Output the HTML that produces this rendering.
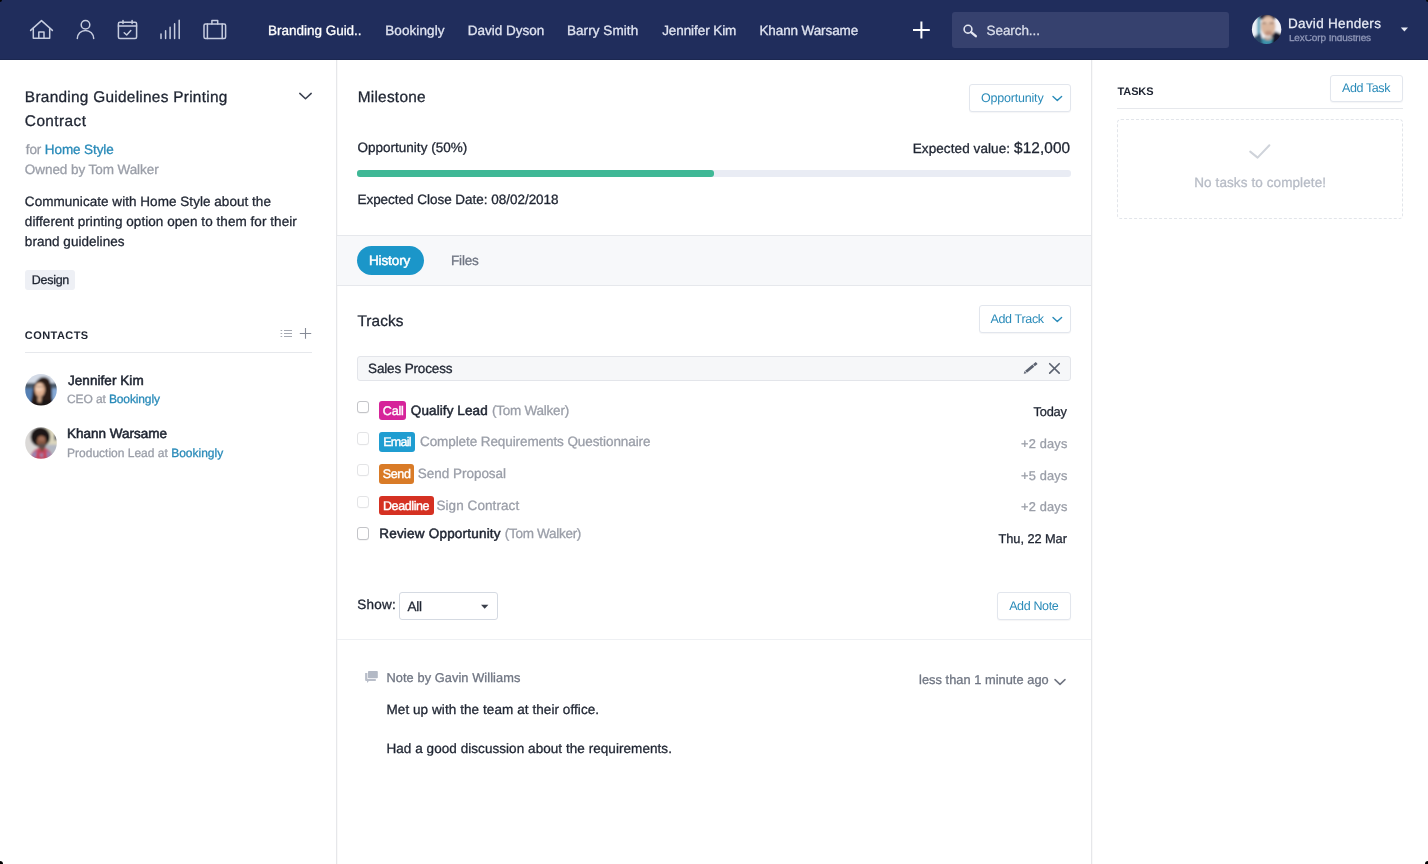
<!DOCTYPE html>
<html><head><meta charset="utf-8">
<style>
*{box-sizing:border-box;margin:0;padding:0}
html,body{width:1428px;height:864px;overflow:hidden;background:#fff}
body{text-rendering:geometricPrecision;font-family:"Liberation Sans",sans-serif;color:#1f2532;font-size:14px;position:relative}
a{color:#2a8bb9;text-decoration:none}
.abs{position:absolute}
svg{position:absolute;left:0;top:0;overflow:visible}
#nav{position:absolute;left:0;top:0;width:1428px;height:60px;background:#202d5c;border-bottom:1px solid #1b2750}
#search{position:absolute;left:952px;top:12px;width:277px;height:36px;background:#36416e;border-radius:3px}
.vline{position:absolute;top:60px;width:1px;height:804px;background:#e6e7ea;box-shadow:1px 0 0 rgba(0,0,0,.025)}
.btn{position:absolute;border:1px solid #e2e6ed;border-radius:3px;background:#fff;box-shadow:0 1px 1px rgba(20,30,60,.04)}
.t{position:absolute;white-space:nowrap;line-height:20px;-webkit-text-stroke-width:.3px}
.tagb{position:absolute;border-radius:3px}
.cb{position:absolute;width:12px;height:12.4px;border:1px solid #c3c4c8;border-radius:3px;background:#fff;box-shadow:0 .5px 0 rgba(0,0,0,.08)}
</style></head><body>
<div id="nav"></div>
<div id="search"></div>
<div class="vline" style="left:336px"></div>
<div class="vline" style="left:1091px"></div>

<div class="abs" style="left:-2px;top:-2px;width:4px;height:4px;border-radius:50%;background:#000"></div>
<div class="abs" style="left:1426px;top:-2px;width:4px;height:4px;border-radius:50%;background:#000"></div>
<div class="abs" style="left:-3px;top:861px;width:6px;height:6px;border-radius:50%;background:#000"></div>
<div class="abs" style="left:1425px;top:861px;width:6px;height:6px;border-radius:50%;background:#000"></div>
<!-- left panel shapes -->
<div class="abs" style="left:25px;top:270px;width:50px;height:20px;background:#eef0f5;border-radius:3px"></div>
<div class="abs" style="left:25px;top:352px;width:287px;height:1px;background:#e6e8ec"></div>

<!-- center shapes -->
<div class="btn" style="left:969px;top:84px;width:102px;height:28px"></div>
<div class="abs" style="left:357px;top:170px;width:714px;height:6.6px;border-radius:3px;background:#e9ecf4"></div>
<div class="abs" style="left:357px;top:170px;width:357px;height:6.6px;border-radius:3px;background:#3fb896"></div>
<div class="abs" style="left:337px;top:235px;width:754px;height:51px;background:#f7f8fa;border-top:1px solid #e6e8ec;border-bottom:1px solid #e6e8ec"></div>
<div class="abs" style="left:357px;top:246px;width:67px;height:29px;border-radius:15px;background:#1b96c9"></div>
<div class="btn" style="left:979px;top:305px;width:92px;height:28px"></div>
<div class="abs" style="left:357px;top:356px;width:714px;height:25px;background:#f6f7f9;border:1px solid #e3e5ea;border-radius:3px"></div>

<div class="cb" style="left:357px;top:400.5px"></div>
<div class="cb" style="left:357px;top:432.3px;opacity:.45"></div>
<div class="cb" style="left:357px;top:464px;opacity:.45"></div>
<div class="cb" style="left:357px;top:495.7px;opacity:.45"></div>
<div class="cb" style="left:357px;top:527.2px"></div>
<div class="tagb" style="left:379px;top:400.7px;width:27.3px;height:19.3px;background:#d6249a"></div>
<div class="tagb" style="left:379px;top:432.4px;width:36.4px;height:19.3px;background:#1f9dd1"></div>
<div class="tagb" style="left:379px;top:464.1px;width:35.3px;height:19.5px;background:#d97b27"></div>
<div class="tagb" style="left:379px;top:495.8px;width:54.5px;height:19.4px;background:#d53122"></div>

<div class="abs" style="left:399px;top:592px;width:99px;height:28px;border:1px solid #d5dae2;border-radius:3px;background:#fff"></div>
<div class="btn" style="left:997px;top:592px;width:74px;height:28px"></div>
<div class="abs" style="left:337px;top:639px;width:754px;height:1px;background:#eef0f3"></div>

<!-- right shapes -->
<div class="btn" style="left:1330px;top:75px;width:73px;height:27px"></div>
<div class="abs" style="left:1117px;top:108px;width:286px;height:1px;background:#e6e8ec"></div>
<div class="abs" style="left:1117px;top:119px;width:286px;height:100px;border:1px dashed #e2e5ea;border-radius:4px"></div>

<div id="txt" style="position:absolute;left:0;top:0;width:1428px;height:864px;will-change:transform">
<!-- org text clipped -->
<div class="abs" style="left:1286px;top:35px;width:100px;height:12px;overflow:hidden"><div id="org" class="t" style="left:2.9px;top:-6px;font-size:10px;color:#9098b8;letter-spacing:-.1px">LexCorp Industries</div></div>

<div id="n1" class="t" style="left:268.05px;top:21px;font-size:13.5px;color:#fff;letter-spacing:-0.019px;-webkit-text-stroke:.3px #fff">Branding Guid..</div>
<div id="n2" class="t" style="left:385.24px;top:21px;font-size:13.5px;color:#dfe3f0;letter-spacing:0.090px;">Bookingly</div>
<div id="n3" class="t" style="left:467.72px;top:21px;font-size:13.5px;color:#dfe3f0;letter-spacing:-0.009px;">David Dyson</div>
<div id="n4" class="t" style="left:566.91px;top:21px;font-size:13.5px;color:#dfe3f0;letter-spacing:0.072px;">Barry Smith</div>
<div id="n5" class="t" style="left:662.14px;top:21px;font-size:13.5px;color:#dfe3f0;letter-spacing:-0.074px;">Jennifer Kim</div>
<div id="n6" class="t" style="left:759.48px;top:21px;font-size:13.5px;color:#dfe3f0;letter-spacing:-0.112px;">Khann Warsame</div>
<div id="se" class="t" style="left:986.62px;top:21px;font-size:13.5px;color:#d9ddea;letter-spacing:-0.090px;">Search...</div>
<div id="us" class="t" style="left:1287.91px;top:14px;font-size:13.5px;color:#e9ecf6;letter-spacing:0.307px;-webkit-text-stroke:.25px #e9ecf6">David Henders</div>
<div id="ti1" class="t" style="left:24.86px;top:88px;font-size:15.4px;color:#1f2532;letter-spacing:0.273px;">Branding Guidelines Printing</div>
<div id="ti2" class="t" style="left:24.86px;top:112px;font-size:15.4px;color:#1f2532;letter-spacing:0.411px;">Contract</div>
<div id="for" class="t" style="left:25.76px;top:140px;font-size:13.5px;color:#9a9ea8;letter-spacing:-0.104px;">for <a>Home Style</a></div>
<div id="own" class="t" style="left:24.86px;top:160px;font-size:13.5px;color:#9a9ea8;letter-spacing:-0.070px;">Owned by Tom Walker</div>
<div id="d1" class="t" style="left:24.86px;top:192px;font-size:13.5px;color:#1f2532;letter-spacing:0.040px;">Communicate with Home Style about the</div>
<div id="d2" class="t" style="left:24.86px;top:212px;font-size:13.5px;color:#1f2532;letter-spacing:0.059px;">different printing option open to them for their</div>
<div id="d3" class="t" style="left:24.86px;top:232px;font-size:13.5px;color:#1f2532;letter-spacing:0.036px;">brand guidelines</div>
<div id="tag" class="t" style="left:31.86px;top:270px;font-size:12.5px;color:#1f2532;letter-spacing:-0.306px;">Design</div>
<div id="con" class="t" style="left:24.86px;top:326px;font-size:11.0px;color:#1f2532;letter-spacing:0.424px;font-weight:bold;-webkit-text-stroke-width:0">CONTACTS</div>
<div id="c1" class="t" style="left:67.95px;top:371px;font-size:13.5px;color:#1f2532;letter-spacing:0.065px;-webkit-text-stroke:.55px #1f2532">Jennifer Kim</div>
<div id="c1s" class="t" style="left:67.05px;top:389px;font-size:12.0px;color:#9a9ea8;letter-spacing:-0.120px;">CEO at <a>Bookingly</a></div>
<div id="c2" class="t" style="left:67.05px;top:424px;font-size:13.5px;color:#1f2532;letter-spacing:0.000px;-webkit-text-stroke:.55px #1f2532">Khann Warsame</div>
<div id="c2s" class="t" style="left:67.05px;top:443px;font-size:12.0px;color:#9a9ea8;letter-spacing:-0.000px;">Production Lead at <a>Bookingly</a></div>
<div id="ms" class="t" style="left:357.67px;top:88px;font-size:15.4px;color:#1f2532;letter-spacing:0.259px;">Milestone</div>
<div id="ob" class="t" style="left:981.00px;top:88px;font-size:12.5px;color:#2a8bb9;letter-spacing:-0.198px;-webkit-text-stroke-width:0">Opportunity</div>
<div id="op" class="t" style="left:357.43px;top:138px;font-size:13.5px;color:#1f2532;letter-spacing:0.017px;">Opportunity (50%)</div>
<div id="ev" class="t" style="left:912.72px;top:139px;font-size:13.5px;color:#1f2532;letter-spacing:0.090px;">Expected value: <span style="font-size:15.4px">$12,000</span></div>
<div id="ecd" class="t" style="left:357.43px;top:190px;font-size:13.5px;color:#1f2532;letter-spacing:-0.024px;">Expected Close Date: 08/02/2018</div>
<div id="hi" class="t" style="left:368.89px;top:251px;font-size:13.5px;color:#fff;letter-spacing:-0.090px;-webkit-text-stroke:.5px #fff">History</div>
<div id="fi" class="t" style="left:451.10px;top:251px;font-size:13.5px;color:#6f7582;letter-spacing:-0.225px;">Files</div>
<div id="tr" class="t" style="left:357.38px;top:312px;font-size:15.4px;color:#1f2532;letter-spacing:0.090px;">Tracks</div>
<div id="at" class="t" style="left:990.43px;top:309px;font-size:12.5px;color:#2a8bb9;letter-spacing:-0.326px;-webkit-text-stroke-width:0">Add Track</div>
<div id="sp" class="t" style="left:368.05px;top:359px;font-size:13.5px;color:#1f2532;letter-spacing:-0.150px;">Sales Process</div>
<div id="t1" class="t" style="left:382.83px;top:401px;font-size:12.5px;color:#fff;letter-spacing:-0.180px;-webkit-text-stroke:.4px #fff">Call</div>
<div id="q1" class="t" style="left:410.86px;top:401px;font-size:13.5px;color:#1f2532;letter-spacing:0.089px;-webkit-text-stroke:.5px #1f2532">Qualify Lead</div>
<div id="q1b" class="t" style="left:492.00px;top:401px;font-size:13.5px;color:#9a9ea8;letter-spacing:-0.237px;">(Tom Walker)</div>
<div id="r1" class="t" style="left:1033.55px;top:402px;font-size:12.8px;color:#1f2532;letter-spacing:-0.202px;">Today</div>
<div id="t2" class="t" style="left:383.22px;top:432px;font-size:12.5px;color:#fff;letter-spacing:-0.727px;-webkit-text-stroke:.4px #fff">Email</div>
<div id="q2" class="t" style="left:420.00px;top:432px;font-size:13.5px;color:#9a9ea8;letter-spacing:-0.085px;">Complete Requirements Questionnaire</div>
<div id="r2" class="t" style="left:1021.06px;top:434px;font-size:12.8px;color:#9a9ea8;letter-spacing:0.180px;">+2 days</div>
<div id="t3" class="t" style="left:382.83px;top:464px;font-size:12.5px;color:#fff;letter-spacing:-0.390px;-webkit-text-stroke:.4px #fff">Send</div>
<div id="q3" class="t" style="left:417.86px;top:464px;font-size:13.5px;color:#9a9ea8;letter-spacing:-0.030px;">Send Proposal</div>
<div id="r3" class="t" style="left:1021.06px;top:466px;font-size:12.8px;color:#9a9ea8;letter-spacing:0.180px;">+5 days</div>
<div id="t4" class="t" style="left:383.00px;top:496px;font-size:12.5px;color:#fff;letter-spacing:-0.403px;-webkit-text-stroke:.4px #fff">Deadline</div>
<div id="q4" class="t" style="left:436.48px;top:496px;font-size:13.5px;color:#9a9ea8;letter-spacing:0.075px;">Sign Contract</div>
<div id="r4" class="t" style="left:1021.06px;top:497px;font-size:12.8px;color:#9a9ea8;letter-spacing:0.180px;">+2 days</div>
<div id="q5" class="t" style="left:379.24px;top:524px;font-size:13.5px;color:#1f2532;letter-spacing:0.208px;-webkit-text-stroke:.5px #1f2532">Review Opportunity</div>
<div id="q5b" class="t" style="left:504.83px;top:524px;font-size:13.5px;color:#9a9ea8;letter-spacing:-0.295px;">(Tom Walker)</div>
<div id="r5" class="t" style="left:998.57px;top:529px;font-size:12.8px;color:#1f2532;letter-spacing:-0.063px;">Thu, 22 Mar</div>
<div id="sh" class="t" style="left:357.24px;top:595px;font-size:13.5px;color:#1f2532;letter-spacing:0.225px;">Show:</div>
<div id="all" class="t" style="left:407.57px;top:597px;font-size:13.5px;color:#1f2532;letter-spacing:-0.270px;">All</div>
<div id="an" class="t" style="left:1009.14px;top:596px;font-size:12.5px;color:#2a8bb9;letter-spacing:-0.360px;-webkit-text-stroke-width:0">Add Note</div>
<div id="nb" class="t" style="left:386.48px;top:668px;font-size:12.8px;color:#6f7582;letter-spacing:0.077px;">Note by Gavin Williams</div>
<div id="ago" class="t" style="left:919.00px;top:670px;font-size:12.8px;color:#6f7582;letter-spacing:0.043px;">less than 1 minute ago</div>
<div id="m1" class="t" style="left:386.48px;top:700px;font-size:13.5px;color:#1f2532;letter-spacing:0.077px;">Met up with the team at their office.</div>
<div id="m2" class="t" style="left:386.48px;top:739px;font-size:13.5px;color:#1f2532;letter-spacing:0.057px;">Had a good discussion about the requirements.</div>
<div id="tk" class="t" style="left:1117.52px;top:82px;font-size:11.0px;color:#1f2532;letter-spacing:-0.113px;font-weight:bold;-webkit-text-stroke-width:0">TASKS</div>
<div id="atk" class="t" style="left:1342.00px;top:78px;font-size:12.5px;color:#2a8bb9;letter-spacing:-0.399px;-webkit-text-stroke-width:0">Add Task</div>
<div id="nt" class="t" style="left:1194.24px;top:173px;font-size:13.5px;color:#b7bcc6;letter-spacing:0.099px;">No tasks to complete!</div>
</div>

<svg width="1428" height="864" viewBox="0 0 1428 864" fill="none">
<defs>
<filter id="bl" x="-10%" y="-10%" width="120%" height="120%"><feGaussianBlur stdDeviation="1"/></filter>
<clipPath id="cA"><circle cx="41" cy="389.8" r="15.8"/></clipPath>
<clipPath id="cB"><circle cx="41" cy="443" r="15.8"/></clipPath>
<clipPath id="cC"><circle cx="1266.6" cy="29.4" r="14.7"/></clipPath>
</defs>
<!-- nav icons -->
<g stroke="#c6ccdf" stroke-width="1.5" stroke-linecap="round" stroke-linejoin="round">
<path d="M30.6 30.4 L41.5 20.6 L52.4 30.4"/>
<path d="M33.3 28.2 V38.3 H49.7 V28.2"/>
<path d="M38.8 38.3 V32 H44 V38.3"/>
<circle cx="85.5" cy="24.8" r="4.3"/>
<path d="M77.3 38.6 a8.2 8.2 0 0 1 16.4 0"/>
<rect x="118.4" y="22.2" width="18.2" height="16.2" rx="1.5"/>
<path d="M118.4 26 H136.6 M123 20.4 V23.6 M132.1 20.4 V23.6"/>
<path d="M124.2 32.8 L126.7 35 L130.8 30.6"/>
<path d="M161 34 V38.6 M165.6 30.8 V38.6 M170.1 27.3 V38.6 M174.6 23.7 V38.6 M179.2 20.2 V38.6"/>
<rect x="204" y="24" width="21.6" height="14.4" rx="1.5"/>
<path d="M211.9 24 V20.6 H217.7 V24 M207.4 24 V38.4 M222.2 24 V38.4"/>
</g>
<path d="M913 30 H929.8 M921.4 21.6 V38.4" stroke="#fff" stroke-width="2"/>
<circle cx="968" cy="29.2" r="3.9" stroke="#e3e6f1" stroke-width="1.6"/>
<path d="M971 32.2 L975.8 36.2" stroke="#e3e6f1" stroke-width="2.4" stroke-linecap="round"/>
<path d="M1400.8 27.4 H1408 L1404.4 31.4 Z" fill="#e6e9f3"/>
<!-- left -->
<path d="M299.8 93.4 L305.5 98.8 L311.2 93.4" stroke="#3a4050" stroke-width="1.5" stroke-linecap="round" stroke-linejoin="round"/>
<path d="M284 330.5 H292 M284 333.5 H292 M284 336.5 H292" stroke="#a4a8b1" stroke-width="1"/>
<path d="M280.6 330.5 H282.2 M280.6 333.5 H282.2 M280.6 336.5 H282.2" stroke="#a4a8b1" stroke-width="1"/>
<path d="M299.8 333.5 H311.2 M305.5 328 V338.8" stroke="#868b97" stroke-width="1.1"/>
<!-- button chevrons -->
<path d="M1053 96.4 L1057.3 100.5 L1061.6 96.4" stroke="#2a8bb9" stroke-width="1.4" stroke-linecap="round" stroke-linejoin="round"/>
<path d="M1053 317.4 L1057.3 321.5 L1061.6 317.4" stroke="#2a8bb9" stroke-width="1.4" stroke-linecap="round" stroke-linejoin="round"/>
<!-- pencil + x -->
<path d="M1023.7 373.7 L1026.49 373.18 L1024.71 371.02 Z M1026.95 372.8 L1025.17 370.64 L1032.52 364.62 L1034.3 366.78 Z M1034.84 366.34 L1033.06 364.18 L1035.81 361.92 L1037.59 364.08 Z" fill="#5b6270"/>
<path d="M1049.7 363.7 L1059.2 373.1 M1059.2 363.7 L1049.7 373.1" stroke="#5b6270" stroke-width="1.6" stroke-linecap="round"/>
<!-- select caret -->
<path d="M481 604.8 H488.4 L484.7 608.7 Z" fill="#3a3f4a"/>
<!-- note icon -->
<rect x="368" y="671.1" width="9.8" height="7.2" rx=".8" fill="#b3b9c5"/>
<path d="M365.1 673 H367.4 V678.9 H375.8 V680.9 H368.9 L367 682.9 V680.9 H365.9 Q365.1 680.9 365.1 680.1 Z" fill="#b9bec9"/>
<path d="M1055 679.6 L1060 684.4 L1065 679.6" stroke="#6f7480" stroke-width="1.5" stroke-linecap="round" stroke-linejoin="round"/>
<!-- tasks check -->
<path d="M1250.2 151.6 L1257.6 157.6 L1269.4 145.2" stroke="#cfd3da" stroke-width="2" stroke-linecap="round" stroke-linejoin="round"/>
<!-- avatar Jennifer -->
<g clip-path="url(#cA)"><g filter="url(#bl)" transform="translate(25.2 374)">
<rect x="-3" y="-3" width="38" height="38" fill="#5580b4"/>
<rect x="24" y="12" width="12" height="18" fill="#86a9d6"/>
<rect x="-3" y="-3" width="38" height="12.3" fill="#d3dae6"/>
<rect x="-3" y="9" width="38" height="5.4" fill="#4c5a6b"/>
<path d="M13 5.5 Q16 2.5 20 3.2 Q24.5 4 25.2 9 Q27.5 16 26.8 24 L29 34 L3 34 Q6.5 27 7 21 Q7.6 10 13 5.5 Z" fill="#2a1c19"/>
<path d="M3 34 Q6 27.5 12 26.5 L22 26 Q27 27 30 31 L30 36 L3 36 Z" fill="#1a1617"/>
<ellipse cx="14.6" cy="15.6" rx="5.2" ry="7.2" fill="#dfae8e"/>
<ellipse cx="13.8" cy="13.6" rx="3.8" ry="4" fill="#f0ccb2"/>
<path d="M12.6 21 L16.6 21 L16 28.5 L12.4 28 Z" fill="#c79f82"/>
<path d="M10.6 12.6 H18.4" stroke="#6b4a3c" stroke-width="1.1" opacity=".55"/>
</g></g>
<!-- avatar Khann -->
<g clip-path="url(#cB)"><g filter="url(#bl)" transform="translate(25.2 427.2)">
<rect x="-3" y="-3" width="38" height="38" fill="#dbd9d7"/>
<rect x="20" y="0" width="15" height="18" fill="#dbd6bd"/>
<rect x="21" y="17.5" width="14" height="11" fill="#b3b8c2"/>
<rect x="29" y="7" width="5" height="6" fill="#5d6168"/>
<circle cx="15.2" cy="9.8" r="9.9" fill="#1b1717"/>
<path d="M4.5 34 Q5 24 12.5 21 L20.5 21 Q27 23.5 27.5 34 Z" fill="#c6455f"/>
<path d="M5.5 28 L11.5 22.5 L10.5 31 Z M21.5 22.5 L26.5 27.5 L22 32 Z M14 27 L18 26 L17 31 Z" fill="#9489b6"/>
<ellipse cx="16.2" cy="14.2" rx="4.5" ry="5.8" fill="#87573f"/>
<ellipse cx="16.4" cy="11.6" rx="3.4" ry="2.4" fill="#a1705a"/>
<ellipse cx="16.8" cy="19" rx="3.8" ry="2.7" fill="#5c4e4a"/>
<path d="M15 21 L19 21 L18.4 24 L15.4 24 Z" fill="#7a4e3c"/>
</g></g>
<!-- avatar David -->
<g clip-path="url(#cC)"><g filter="url(#bl)" transform="translate(1252 14.6)">
<rect x="-3" y="-3" width="36" height="36" fill="#f3f3f8"/>
<rect x="5.2" y="1" width="3.2" height="24" fill="#5aa3bb"/>
<rect x="2" y="8" width="3" height="14" fill="#e6eef5"/>
<ellipse cx="15.8" cy="2" rx="8.8" ry="4.6" fill="#1b2240"/>
<path d="M16.5 32 L19.5 21 L23.5 17 L33 21.5 L33 33 Z" fill="#121929"/>
<path d="M1 23 L8.5 18.5 L13 33 L1 33 Z" fill="#2a4868"/>
<path d="M9.5 24 L21 22.5 L19 33 L11 33 Z" fill="#3d92ab"/>
<ellipse cx="16.2" cy="11.6" rx="7.3" ry="10.4" fill="#d9b59d"/>
<ellipse cx="15.6" cy="6.2" rx="5.6" ry="2.6" fill="#e6c7b2"/>
<path d="M10.2 8.6 H14.2 M17.4 8.6 H21.6" stroke="#5f4a44" stroke-width="1.2" opacity=".7"/>
<ellipse cx="16.6" cy="18.6" rx="3.6" ry="2.4" fill="#b78876" opacity=".75"/>
<path d="M12 22 Q16.5 25 21 21.5 L20 24 Q16 27 12.6 24.4 Z" fill="#c9a590"/>
</g></g>

</svg>
</body></html>
